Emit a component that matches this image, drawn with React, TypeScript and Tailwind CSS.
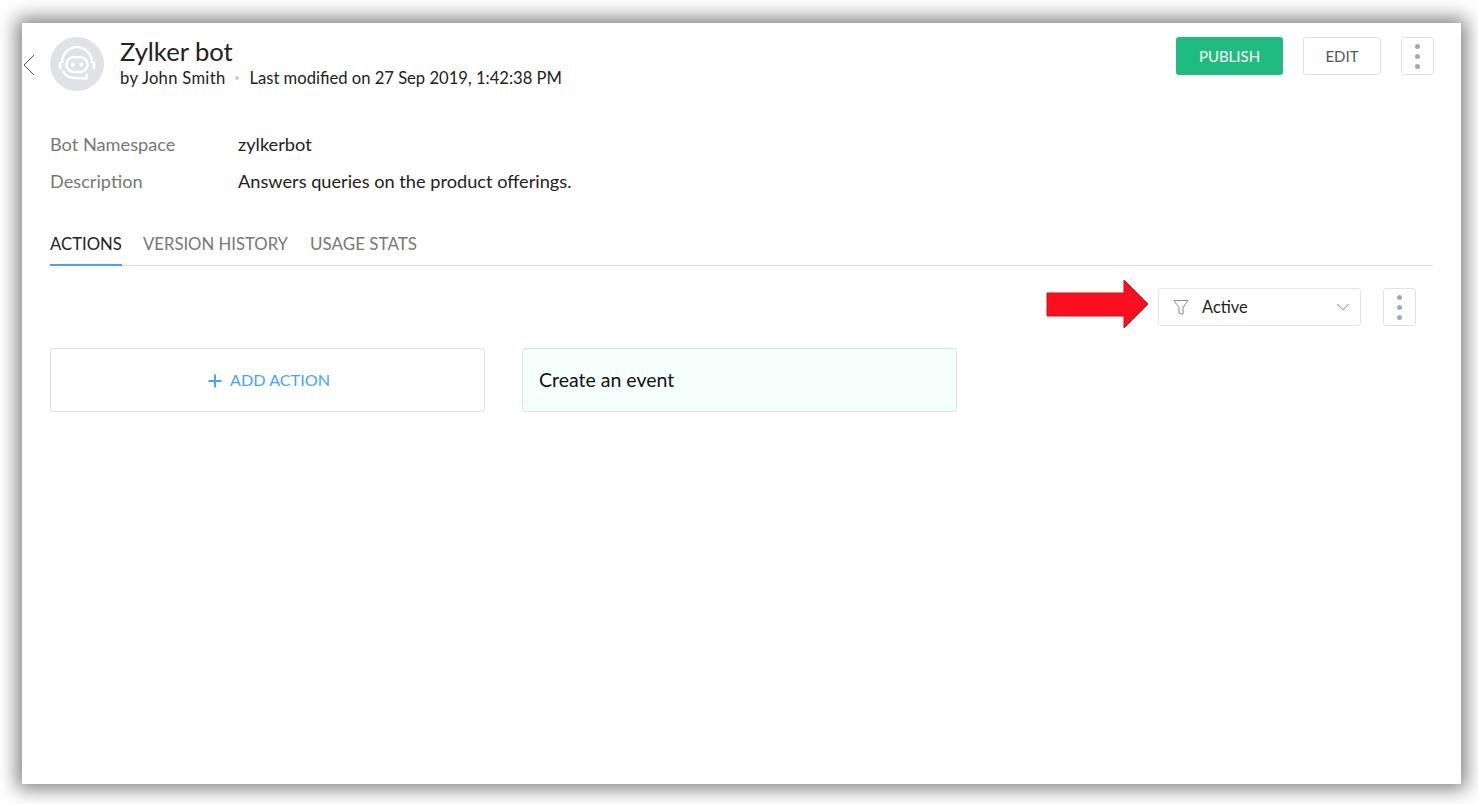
import { ChevronDown, Plus } from "lucide-react"

function DotsButton() {
  return (
    <button className="w-[33px] h-[38px] rounded-[3px] border border-[#e2e2e2] bg-white flex flex-col items-center justify-center gap-[5px]">
      <span className="w-[5px] h-[5px] rounded-full bg-[#a3a8b5]" />
      <span className="w-[5px] h-[5px] rounded-full bg-[#a3a8b5]" />
      <span className="w-[5px] h-[5px] rounded-full bg-[#a3a8b5]" />
    </button>
  )
}

function BotAvatar() {
  return (
    <div className="w-[54px] h-[54px] rounded-full bg-[#e1e2e8] flex items-center justify-center shrink-0">
      <svg width="38" height="38" viewBox="0 0 36 36" fill="none" stroke="#fff" strokeLinecap="round" strokeWidth="2.3">
        <path d="M4 16a14 14 0 0 1 28 0" />
        <path d="M2 17v5M34 17v5" strokeWidth="2.600" />
        <rect x="8" y="11.500" width="20" height="14" rx="7" />
        <path d="M5 25c2 4.500 7 6.500 13 6.500h8.500" />
        <path d="M27 28v3.500" />
        <circle cx="14" cy="18.500" r="2" fill="#fff" stroke="none" />
        <circle cx="22" cy="18.500" r="2" fill="#fff" stroke="none" />
      </svg>
    </div>
  )
}

export default function App() {
  return (
    <div className="w-[1478px] h-[804px] bg-white overflow-hidden pt-[23px] pl-[22px] font-['Lato','Noto_Sans',sans-serif]">
      <div className="w-[1439px] h-[761px] bg-white shadow-[0_0_18px_5px_rgba(0,0,0,0.5)] pt-[14px] pr-[27px]">
        <div className="flex items-start">
          <svg width="14" height="24" viewBox="0 0 14 24" fill="none" stroke="#4a5068" strokeWidth="1" className="mt-[16px] shrink-0">
            <path d="M12 2 2 12l10 10" />
          </svg>
          <div className="ml-[14px]">
            <BotAvatar />
          </div>
          <div className="ml-[16px] flex-1">
            <div className="text-[25.6px] leading-[30px] text-[#222] -mt-[1px]">Zylker bot</div>
            <div className="flex items-center text-[16.6px] leading-[20px] text-[#222] mt-[2px]">
              <span className="tracking-[0.3px]">by John Smith</span>
              <span className="w-[4px] h-[4px] rounded-full bg-[#ccc] mx-[10px]" />
              <span>Last modified on 27 Sep 2019, 1:42:38 PM</span>
            </div>
          </div>
          <button className="w-[107px] h-[38px] rounded-[3px] bg-[#1fbc82] text-white text-[15px]">PUBLISH</button>
          <button className="w-[78px] h-[38px] ml-[20px] rounded-[3px] border border-[#e2e2e2] bg-white text-[#555] text-[15px]">EDIT</button>
          <div className="ml-[20px]">
            <DotsButton />
          </div>
        </div>

        <div className="ml-[28px] mt-[43px] grid grid-cols-[188px_1fr] gap-y-[17px] text-[18.2px] leading-[20px]">
          <div className="text-[#777]">Bot Namespace</div>
          <div className="text-[#222]">zylkerbot</div>
          <div className="text-[#777]">Description</div>
          <div className="text-[#222]">Answers queries on the product offerings.</div>
        </div>

        <div className="ml-[28px] mr-[1px] mt-[43px] border-b border-[#dcdcdc] flex gap-[21px] text-[16.7px] leading-[20px] text-[#777]">
          <div className="w-[72px] h-[32px] -mb-px border-b-2 border-[#44a6f5] text-[#222] whitespace-nowrap">ACTIONS</div>
          <div className="whitespace-nowrap">VERSION HISTORY</div>
          <div className="whitespace-nowrap text-[17px] ml-[1px]">USAGE STATS</div>
        </div>

        <div className="mt-[17px] flex justify-end items-center pr-[18px] h-[48px]">
          <svg width="104" height="50" viewBox="0 0 104 50" className="mr-[8px] -mt-[6px]">
            <polygon points="1,14 78,14 78,1 102,25 78,49 78,37 1,37" fill="#fb0f1e" stroke="#c5121c" strokeWidth="1" />
          </svg>
          <div className="w-[203px] h-[38px] rounded-[3px] border border-[#e6e6e6] bg-white flex items-center pl-[14px] pr-[6px]">
            <svg width="16" height="17" viewBox="0 0 16 17" fill="none" stroke="#8a8d96" strokeWidth="1">
              <path d="M1 1.500h14L10 8.500v7l-4-1.500V8.500z" strokeLinejoin="round" />
            </svg>
            <span className="ml-[13px] text-[16.4px] text-[#222] flex-1">Active</span>
            <ChevronDown className="w-[22px] h-[22px] text-[#777]" strokeWidth={1} />
          </div>
          <div className="ml-[22px]">
            <DotsButton />
          </div>
        </div>

        <div className="ml-[28px] mt-[17px] flex gap-[37px]">
          <div className="w-[435px] h-[64px] rounded-[3px] border border-[#dfdfdf] bg-white flex items-center justify-center text-[#44a6f5] text-[16.2px] pt-[1px]">
            <Plus className="w-[20px] h-[20px] mr-[5px]" strokeWidth={2.4} />
            ADD ACTION
          </div>
          <div className="w-[435px] h-[64px] rounded-[3px] border border-[#cfe9e1] bg-[#f5fffc] flex items-center pl-[16px] text-[#111] text-[19.5px]">
            Create an event
          </div>
        </div>
      </div>
    </div>
  )
}
